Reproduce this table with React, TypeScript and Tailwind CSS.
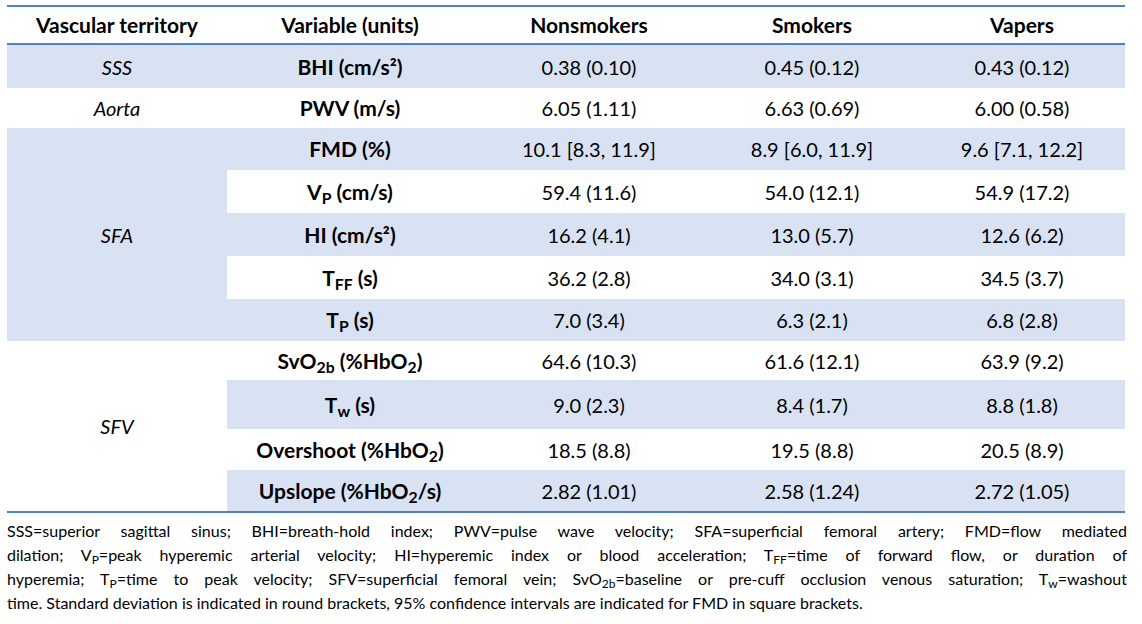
import React from "react";

const BLUE = "bg-[#d9e2f3]";

type Row = {
  label: React.ReactNode;
  values: [string, string, string];
  blue: boolean;
};

const rows: Row[] = [
  { label: <>BHI (cm/s²)</>, values: ["0.38 (0.10)", "0.45 (0.12)", "0.43 (0.12)"], blue: true },
  { label: <>PWV (m/s)</>, values: ["6.05 (1.11)", "6.63 (0.69)", "6.00 (0.58)"], blue: false },
  { label: <>FMD (%)</>, values: ["10.1 [8.3, 11.9]", "8.9 [6.0, 11.9]", "9.6 [7.1, 12.2]"], blue: true },
  { label: <>V<sub>P</sub> (cm/s)</>, values: ["59.4 (11.6)", "54.0 (12.1)", "54.9 (17.2)"], blue: false },
  { label: <>HI (cm/s²)</>, values: ["16.2 (4.1)", "13.0 (5.7)", "12.6 (6.2)"], blue: true },
  { label: <>T<sub>FF</sub> (s)</>, values: ["36.2 (2.8)", "34.0 (3.1)", "34.5 (3.7)"], blue: false },
  { label: <>T<sub>P</sub> (s)</>, values: ["7.0 (3.4)", "6.3 (2.1)", "6.8 (2.8)"], blue: true },
  { label: <>SvO<sub>2b</sub> (%HbO<sub>2</sub>)</>, values: ["64.6 (10.3)", "61.6 (12.1)", "63.9 (9.2)"], blue: false },
  { label: <>T<sub>w</sub> (s)</>, values: ["9.0 (2.3)", "8.4 (1.7)", "8.8 (1.8)"], blue: true },
  { label: <>Overshoot (%HbO<sub>2</sub>)</>, values: ["18.5 (8.8)", "19.5 (8.8)", "20.5 (8.9)"], blue: false },
  { label: <>Upslope (%HbO<sub>2</sub>/s)</>, values: ["2.82 (1.01)", "2.58 (1.24)", "2.72 (1.05)"], blue: true },
];

// territory cells, placed before the row index they start on
const territories: Record<number, React.ReactNode> = {
  0: <div className={`row-span-1 flex items-center justify-center italic ${BLUE}`}>SSS</div>,
  1: <div className="row-span-1 flex items-center justify-center italic">Aorta</div>,
  2: <div className={`row-span-5 flex items-center justify-center italic ${BLUE}`}>SFA</div>,
  7: <div className="row-span-4 flex items-center justify-center italic">SFV</div>,
};

function Footnote() {
  const line = "text-justify [text-align-last:justify]";
  return (
    <div className="mt-[6px] w-[1120px] text-[16px] leading-[24px] text-black">
      <p className={line}>
        SSS=superior sagittal sinus; BHI=breath-hold index; PWV=pulse wave velocity; SFA=superficial femoral artery; FMD=flow mediated
      </p>
      <p className={line}>
        dilation; V<sub>P</sub>=peak hyperemic arterial velocity; HI=hyperemic index or blood acceleration; T<sub>FF</sub>=time of forward flow, or duration of
      </p>
      <p className={line}>
        hyperemia; T<sub>P</sub>=time to peak velocity; SFV=superficial femoral vein; SvO<sub>2b</sub>=baseline or pre-cuff occlusion venous saturation; T<sub>w</sub>=washout
      </p>
      <p>
        time. Standard deviation is indicated in round brackets, 95% confidence intervals are indicated for FMD in square brackets.
      </p>
    </div>
  );
}

export default function App() {
  const cols = "grid grid-cols-[220px_246px_232px_214px_206px]";
  return (
    <div
      className="w-[1142px] h-[624px] bg-white pt-[5px] pl-[7px] text-black"
      style={{ fontFamily: "Lato, 'Open Sans', sans-serif" }}
    >
      <div className="w-[1118px] border-y-2 border-[#4f7fd0] text-[20px]">
        {/* Header */}
        <div className={`${cols} h-[38px] border-b-2 border-[#4f7fd0] text-[21px] font-bold`}>
          <div className="flex items-center justify-center">Vascular territory</div>
          <div className="flex items-center justify-center">Variable (units)</div>
          <div className="flex items-center justify-center">Nonsmokers</div>
          <div className="flex items-center justify-center">Smokers</div>
          <div className="flex items-center justify-center">Vapers</div>
        </div>

        {/* Body */}
        <div className={`${cols} grid-rows-[43px_40px_42px_43px_43px_43px_42px_39px_49px_41px_41px]`}>
          {rows.map((r, i) => {
            const bg = r.blue ? BLUE : "";
            return (
              <React.Fragment key={i}>
                {territories[i]}
                <div className={`flex items-center justify-center text-[21px] font-bold ${bg}`}>
                  <span>{r.label}</span>
                </div>
                {r.values.map((v, j) => (
                  <div key={j} className={`flex items-center justify-center ${bg}`}>
                    {v}
                  </div>
                ))}
              </React.Fragment>
            );
          })}
        </div>
      </div>
      <Footnote />
    </div>
  );
}
